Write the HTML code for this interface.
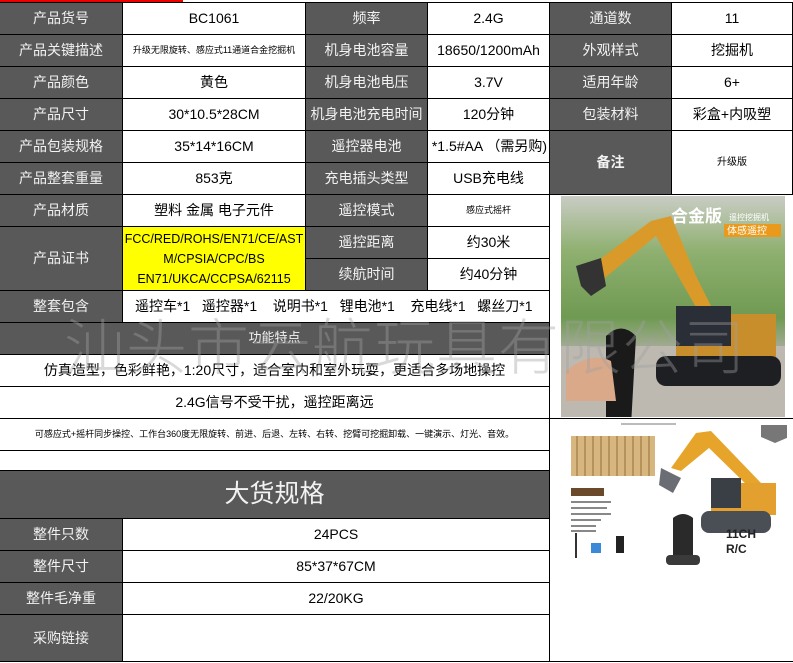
<!DOCTYPE html>
<html><head><meta charset="utf-8"><style>
*{margin:0;padding:0;box-sizing:border-box}
body{width:793px;height:663px;background:#fff;position:relative;overflow:hidden;font-family:"Liberation Sans","Noto Sans CJK SC",sans-serif;font-size:14px;color:#000}
.c{position:absolute;display:flex;align-items:center;justify-content:center;text-align:center;border-right:1px solid #000;border-bottom:1px solid #000;white-space:nowrap;line-height:1.3}
.g{background:#595959;color:#f2f2f2}
.s{font-size:9px}
.wm{position:absolute;left:64px;top:298px;font-size:61px;letter-spacing:1px;color:rgba(160,160,160,.4);font-family:"Noto Sans CJK SC",sans-serif;font-weight:300;white-space:nowrap;pointer-events:none}
</style></head><body>
<div style="position:absolute;left:0;top:0;width:183px;height:3px;background:#e00"></div>
<div style="position:absolute;left:0;top:145px;width:3px;height:17px;background:#1a9a50"></div>
<div style="position:absolute;left:0;top:2px;width:793px;height:1px;background:#000"></div>

<div class="c g" style="left:0;top:3px;width:123px;height:32px">产品货号</div>
<div class="c" style="left:123px;top:3px;width:183px;height:32px">BC1061</div>
<div class="c g" style="left:306px;top:3px;width:122px;height:32px">频率</div>
<div class="c" style="left:428px;top:3px;width:122px;height:32px">2.4G</div>
<div class="c g" style="left:550px;top:3px;width:122px;height:32px">通道数</div>
<div class="c" style="left:672px;top:3px;width:121px;height:32px">11</div>

<div class="c g" style="left:0;top:35px;width:123px;height:32px">产品关键描述</div>
<div class="c s" style="left:123px;top:35px;width:183px;height:32px">升级无限旋转、感应式11通道合金挖掘机</div>
<div class="c g" style="left:306px;top:35px;width:122px;height:32px">机身电池容量</div>
<div class="c" style="left:428px;top:35px;width:122px;height:32px">18650/1200mAh</div>
<div class="c g" style="left:550px;top:35px;width:122px;height:32px">外观样式</div>
<div class="c" style="left:672px;top:35px;width:121px;height:32px">挖掘机</div>

<div class="c g" style="left:0;top:67px;width:123px;height:32px">产品颜色</div>
<div class="c" style="left:123px;top:67px;width:183px;height:32px">黄色</div>
<div class="c g" style="left:306px;top:67px;width:122px;height:32px">机身电池电压</div>
<div class="c" style="left:428px;top:67px;width:122px;height:32px">3.7V</div>
<div class="c g" style="left:550px;top:67px;width:122px;height:32px">适用年龄</div>
<div class="c" style="left:672px;top:67px;width:121px;height:32px">6+</div>

<div class="c g" style="left:0;top:99px;width:123px;height:32px">产品尺寸</div>
<div class="c" style="left:123px;top:99px;width:183px;height:32px">30*10.5*28CM</div>
<div class="c g" style="left:306px;top:99px;width:122px;height:32px;overflow:hidden">机身电池充电时间</div>
<div class="c" style="left:428px;top:99px;width:122px;height:32px">120分钟</div>
<div class="c g" style="left:550px;top:99px;width:122px;height:32px">包装材料</div>
<div class="c" style="left:672px;top:99px;width:121px;height:32px">彩盒+内吸塑</div>

<div class="c g" style="left:0;top:131px;width:123px;height:32px">产品包装规格</div>
<div class="c" style="left:123px;top:131px;width:183px;height:32px">35*14*16CM</div>
<div class="c g" style="left:306px;top:131px;width:122px;height:32px">遥控器电池</div>
<div class="c" style="left:428px;top:131px;width:122px;height:32px;overflow:hidden;justify-content:flex-end;padding-right:2px">*1.5#AA （需另购)</div>
<div class="c g" style="left:550px;top:131px;width:122px;height:64px;font-weight:bold">备注</div>
<div class="c s" style="left:672px;top:131px;width:121px;height:64px;font-size:10px">升级版</div>
<div class="c g" style="left:0;top:163px;width:123px;height:32px">产品整套重量</div>
<div class="c" style="left:123px;top:163px;width:183px;height:32px">853克</div>
<div class="c g" style="left:306px;top:163px;width:122px;height:32px">充电插头类型</div>
<div class="c" style="left:428px;top:163px;width:122px;height:32px">USB充电线</div>

<div class="c g" style="left:0;top:195px;width:123px;height:32px">产品材质</div>
<div class="c" style="left:123px;top:195px;width:183px;height:32px">塑料 金属 电子元件</div>
<div class="c g" style="left:306px;top:195px;width:122px;height:32px">遥控模式</div>
<div class="c s" style="left:428px;top:195px;width:122px;height:32px">感应式摇杆</div>

<div class="c g" style="left:0;top:227px;width:123px;height:64px">产品证书</div>
<div class="c" style="left:123px;top:227px;width:183px;height:64px;background:#ff0;font-size:12.5px;line-height:20px">FCC/RED/ROHS/EN71/CE/AST<br>M/CPSIA/CPC/BS<br>EN71/UKCA/CCPSA/62115</div>
<div class="c g" style="left:306px;top:227px;width:122px;height:32px">遥控距离</div>
<div class="c" style="left:428px;top:227px;width:122px;height:32px">约30米</div>
<div class="c g" style="left:306px;top:259px;width:122px;height:32px">续航时间</div>
<div class="c" style="left:428px;top:259px;width:122px;height:32px">约40分钟</div>

<div class="c g" style="left:0;top:291px;width:123px;height:32px">整套包含</div>
<div class="c" style="left:123px;top:291px;width:427px;height:32px;justify-content:flex-start;padding-left:12px">遥控车*1&nbsp;&nbsp;&nbsp;遥控器*1&nbsp;&nbsp;&nbsp;&nbsp;说明书*1&nbsp;&nbsp;&nbsp;锂电池*1&nbsp;&nbsp;&nbsp;&nbsp;充电线*1&nbsp;&nbsp;&nbsp;螺丝刀*1</div>
<div class="c g" style="left:0;top:323px;width:550px;height:32px;font-size:13px">功能特点</div>
<div class="c" style="left:0;top:355px;width:550px;height:32px">仿真造型，色彩鲜艳，1:20尺寸，适合室内和室外玩耍，更适合多场地操控</div>
<div class="c" style="left:0;top:387px;width:550px;height:32px">2.4G信号不受干扰，遥控距离远</div>
<div class="c s" style="left:0;top:419px;width:550px;height:32px">可感应式+摇杆同步操控、工作台360度无限旋转、前进、后退、左转、右转、挖臂可挖掘卸载、一键演示、灯光、音效。</div>
<div class="c" style="left:0;top:451px;width:550px;height:20px"></div>
<div class="c g" style="left:0;top:471px;width:550px;height:48px;font-size:25px">大货规格</div>
<div class="c g" style="left:0;top:519px;width:123px;height:32px">整件只数</div>
<div class="c" style="left:123px;top:519px;width:427px;height:32px">24PCS</div>
<div class="c g" style="left:0;top:551px;width:123px;height:32px">整件尺寸</div>
<div class="c" style="left:123px;top:551px;width:427px;height:32px">85*37*67CM</div>
<div class="c g" style="left:0;top:583px;width:123px;height:32px">整件毛净重</div>
<div class="c" style="left:123px;top:583px;width:427px;height:32px">22/20KG</div>
<div class="c g" style="left:0;top:615px;width:123px;height:47px">采购链接</div>
<div class="c" style="left:123px;top:615px;width:427px;height:47px"></div>
<div style="position:absolute;left:550px;top:418px;width:243px;height:1px;background:#000"></div>
<div style="position:absolute;left:550px;top:661px;width:243px;height:1px;background:#000"></div>

<svg style="position:absolute;left:561px;top:196px" width="224" height="221" viewBox="0 0 224 221">
<defs><linearGradient id="bg" x1="0" y1="0" x2="0" y2="1"><stop offset="0" stop-color="#c9ccc4"/><stop offset=".25" stop-color="#8fb070"/><stop offset=".55" stop-color="#6f9a52"/><stop offset=".7" stop-color="#a9ad9c"/><stop offset="1" stop-color="#b9b6ad"/></linearGradient></defs>
<rect width="224" height="221" fill="url(#bg)"/>
<rect x="0" y="150" width="224" height="71" fill="#bdb9b0"/>
<path d="M30 70 L90 25 L110 20 L135 80 L150 110 L140 120 L120 85 L95 40 L40 85 Z" fill="#d99a2a"/>
<path d="M15 70 L40 62 L45 90 L30 100 L20 90 Z" fill="#333"/>
<rect x="115" y="118" width="100" height="45" fill="#c88e2c"/>
<rect x="115" y="110" width="55" height="40" fill="#2a2e36"/>
<rect x="95" y="160" width="125" height="30" rx="10" fill="#1d1f23"/>
<path d="M45 140 q15 -15 30 0 l-5 90 h-25 z" fill="#1a1a1a"/>
<path d="M5 175 q25 -20 45 -10 l5 40 h-50 z" fill="#d9a98a"/>
<text x="110" y="26" font-size="17" font-weight="bold" fill="#fff" font-family="Noto Sans CJK SC,sans-serif">合金版</text>
<rect x="163" y="28" width="57" height="13" fill="#e99a1d"/>
<text x="166" y="38" font-size="10" fill="#fff" font-family="Noto Sans CJK SC,sans-serif">体感遥控</text>
<text x="168" y="24" font-size="8" fill="#fff" font-family="Noto Sans CJK SC,sans-serif">遥控挖掘机</text>
</svg>
<svg style="position:absolute;left:561px;top:423px" width="226" height="146" viewBox="0 0 226 146">
<rect width="226" height="146" fill="#fff"/>
<rect x="10" y="13" width="84" height="40" fill="#d8b67f"/>
<g stroke="#a9874f" stroke-width="1.5"><path d="M16 13v40M24 13v40M32 13v40M40 13v40M48 13v40M56 13v40M64 13v40M72 13v40M80 13v40M88 13v40"/></g>
<rect x="10" y="65" width="33" height="8" fill="#6b4a2c"/>
<g fill="#888"><rect x="10" y="78" width="40" height="2"/><rect x="10" y="84" width="36" height="2"/><rect x="10" y="90" width="40" height="2"/><rect x="10" y="96" width="30" height="2"/><rect x="10" y="102" width="25" height="2"/><rect x="10" y="107" width="25" height="2"/></g>
<path d="M110 45 L135 10 L150 8 L200 60 L192 68 L148 25 L120 48 Z" fill="#e6a52a"/>
<path d="M100 45 L120 55 L112 70 L98 62 Z" fill="#6a6e74"/>
<rect x="150" y="60" width="65" height="32" fill="#e3a02f"/>
<rect x="150" y="55" width="30" height="30" fill="#3a3f46"/>
<rect x="140" y="88" width="70" height="22" rx="8" fill="#4a4e55"/>
<path d="M112 95 q10 -8 20 0 v45 h-20 z" fill="#2a2a2a"/>
<rect x="105" y="132" width="34" height="10" rx="4" fill="#3a3a3a"/>
<text x="165" y="115" font-size="12" font-weight="bold" fill="#222">11CH</text>
<text x="165" y="130" font-size="12" font-weight="bold" fill="#222">R/C</text>
<rect x="60" y="0" width="55" height="2" fill="#bbb"/>
<path d="M200 2h28v12l-14 6l-14 -6z" fill="#777"/>
<rect x="30" y="120" width="10" height="10" fill="#3a8ad8"/>
<rect x="14" y="110" width="2" height="25" fill="#333"/>
<rect x="55" y="113" width="8" height="17" fill="#222"/>
</svg>

<div class="wm">汕头市云航玩具有限公司</div>
</body></html>
